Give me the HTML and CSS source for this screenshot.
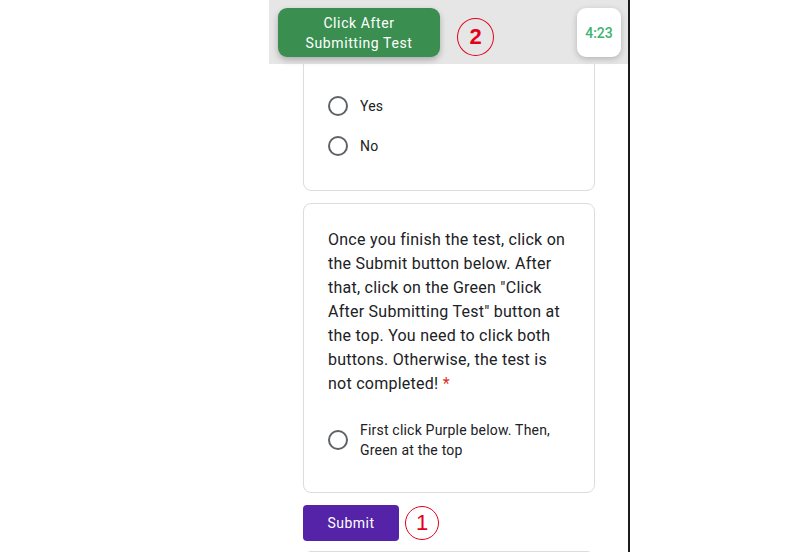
FILE: index.html
```html
<!doctype html>
<html lang="en">
<head>
  <meta charset="UTF-8">
  <title>Test</title>
  <link rel="stylesheet" href="styles.css">
</head>
<body>
  <div class="frame">
    <div class="topbar">
      <div class="green-btn">Click After<br>Submitting Test</div>
      <div class="step step-2">2</div>
      <div class="timer">4:23</div>
    </div>

    <div class="form">
      <div class="card card-first">
        <div class="question">Have you read all the rules for this test and do they apply?</div>
        <div class="option"><span class="radio"></span><span class="label">Yes</span></div>
        <div class="option"><span class="radio"></span><span class="label">No</span></div>
      </div>

      <div class="card">
        <div class="question">Once you finish the test, click on the Submit button below. After that, click on the Green "Click After Submitting Test" button at the top. You need to click both buttons. Otherwise, the test is not completed! <span class="req">*</span></div>
        <div class="option option-multi"><span class="radio"></span><span class="label">First click Purple below. Then, Green at the top</span></div>
      </div>

      <div class="actions">
        <div class="submit">Submit</div>
        <div class="step step-1">1</div>
      </div>
      <div class="card card-next"></div>
    </div>
  </div>
</body>
</html>
```
FILE: styles.css
```css
*{margin:0;
  padding:0;
  box-sizing:border-box;}
body{background:#fff;
     font-family:Roboto, "Liberation Sans", sans-serif;
     color:#202124;}
.frame{position:relative;
       width:361px;
       height:552px;
       margin-left:269px;
       border-right:2px solid #1c1c1c;
       overflow:hidden;}
.topbar{position:absolute;
        top:0;
        left:0;
        right:0;
        height:64px;
        background:#e6e6e6;
        display:flex;
        align-items:flex-start;
        padding:8px 7px 0 9px;
        z-index:2;}
.green-btn{width:162px;
           height:49px;
           background:#3a8f50;
           color:#fff;
           border-radius:9px;
           font-size:14px;
           line-height:20px;
           letter-spacing:0.6px;
           text-align:center;
           padding-top:5px;
           box-shadow:0 3px 6px rgba(0,0,0,0.25);}
.step{border:1px solid #e4001b;
      border-radius:50%;
      color:#e4001b;
      display:flex;
      align-items:center;
      justify-content:center;
      font-family:"Liberation Sans", Arial, sans-serif;
      font-weight:bold;}
.step-2{width:37px;
        height:38px;
        margin:10px 0 0 17px;
        font-size:22px;}
.timer{margin-left:auto;
       width:44px;
       height:49px;
       background:#fff;
       border-radius:9px;
       box-shadow:0 2px 6px rgba(0,0,0,0.22);
       color:#3cb371;
       font-size:14px;
       font-weight:500;
       display:flex;
       align-items:center;
       justify-content:center;}
.form{padding:0 33px 0 34px;}
.card{background:#fff;
      border:1px solid #dadce0;
      border-radius:8px;
      padding:24px 24px 24px 24px;
      margin-bottom:12px;}
.card-first{margin-top:-11px;}
.question{font-size:16px;
          line-height:24px;
          margin-bottom:24px;
          letter-spacing:0.25px;}
.req{color:#d93025;}
.option{display:flex;
        align-items:center;
        min-height:40px;}
.option-multi{margin-bottom:8px;}
.radio{flex:none;
       width:20px;
       height:20px;
       border:2px solid #5f6368;
       border-radius:50%;
       margin-right:12px;}
.label{font-size:14px;
       line-height:20px;
       letter-spacing:0.2px;}
.actions{display:flex;
         align-items:center;
         margin-bottom:10px;}
.submit{width:96px;
        height:36px;
        background:#5423a8;
        color:#fff;
        border-radius:4px;
        font-size:14px;
        letter-spacing:0.5px;
        display:flex;
        align-items:center;
        justify-content:center;}
.step-1{width:34px;
        height:34px;
        margin-left:6px;
        font-size:22px;
        font-weight:normal;}
.card-next{height:60px;}
```
